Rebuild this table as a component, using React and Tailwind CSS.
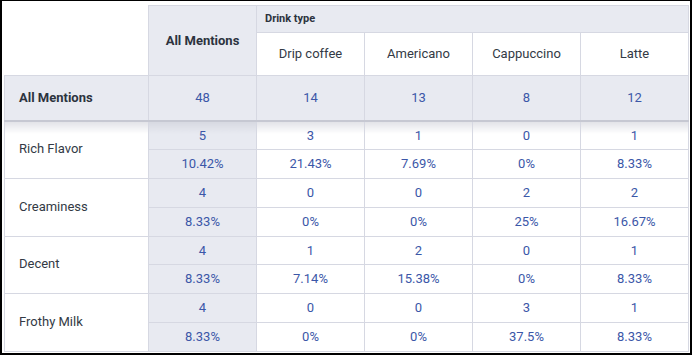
const drinks = ["Drip coffee", "Americano", "Cappuccino", "Latte"];

const totals = { all: 48, drinks: [14, 13, 8, 12] };

const rows = [
  { label: "Rich Flavor", all: [5, "10.42%"], drinks: [[3, "21.43%"], [1, "7.69%"], [0, "0%"], [1, "8.33%"]] },
  { label: "Creaminess", all: [4, "8.33%"], drinks: [[0, "0%"], [0, "0%"], [2, "25%"], [2, "16.67%"]] },
  { label: "Decent", all: [4, "8.33%"], drinks: [[1, "7.14%"], [2, "15.38%"], [0, "0%"], [1, "8.33%"]] },
  { label: "Frothy Milk", all: [4, "8.33%"], drinks: [[0, "0%"], [0, "0%"], [3, "37.5%"], [1, "8.33%"]] },
];

// row heights so the grid lines land where the screenshot has them
const countHeights = ["h-[29px]", "h-[29px]", "h-[28px]", "h-[29px]"];

const App = () => {
  return (
    <div
      className="w-[692px] h-[355px] bg-white border-black border-t border-l-2 border-r-2 border-b-2 pl-[2px] pt-[4px] overflow-hidden"
      style={{ fontFamily: "Roboto, 'Liberation Sans', sans-serif" }}
    >
      <table className="table-fixed border-collapse w-[684px] text-[13px] text-[#333a45]">
        <colgroup>
          <col className="w-[144px]" />
          <col className="w-[108px]" />
          <col className="w-[108px]" />
          <col className="w-[108px]" />
          <col className="w-[108px]" />
          <col className="w-[108px]" />
        </colgroup>

        <thead>
          <tr className="h-[27px]">
            <th rowSpan={2} className="bg-white"></th>
            <th
              rowSpan={2}
              className="bg-[#e8eaf1] border border-[#d6d8e2] font-bold text-center text-[#2c333e]"
            >
              All Mentions
            </th>
            <th
              colSpan={4}
              className="bg-[#e8eaf1] border border-[#d6d8e2] text-left pl-[8px] text-[11px] font-bold text-[#2c333e]"
            >
              Drink type
            </th>
          </tr>
          <tr className="h-[43px]">
            {drinks.map((d) => (
              <th key={d} className="bg-white border border-[#d6d8e2] font-normal text-center">
                {d}
              </th>
            ))}
          </tr>
          <tr className="h-[45px]">
            <th className="bg-[#e8eaf1] border border-[#d6d8e2] border-b-[#c6c8d2] border-b-2 text-left pl-[14px] font-bold text-[#2c333e]">
              All Mentions
            </th>
            <td className="bg-[#e8eaf1] border border-[#d6d8e2] border-b-[#c6c8d2] border-b-2 text-center text-[#3b57a8]">
              {totals.all}
            </td>
            {totals.drinks.map((n, i) => (
              <td
                key={i}
                className="bg-[#e8eaf1] border border-[#d6d8e2] border-b-[#c6c8d2] border-b-2 text-center text-[#3b57a8]"
              >
                {n}
              </td>
            ))}
          </tr>
        </thead>

        <tbody>
          {rows.map((row, index) => {
            const first = index === 0;
            return [
              <tr key={row.label + "-n"} className={countHeights[index]}>
                <td
                  rowSpan={2}
                  className={`border border-[#d6d8e2] pl-[14px] pb-[2px] ${
                    first ? "bg-[linear-gradient(to_bottom,#e2e3e8,#ffffff_12px)]" : "bg-white"
                  }`}
                >
                  {row.label}
                </td>
                <td
                  className={`border border-[#d6d8e2] text-center text-[#3b57a8] ${
                    first ? "bg-[linear-gradient(to_bottom,#d7d9e1,#e8eaf1_12px)]" : "bg-[#e8eaf1]"
                  }`}
                >
                  {row.all[0]}
                </td>
                {row.drinks.map((c, i) => (
                  <td
                    key={i}
                    className={`border border-[#d6d8e2] text-center text-[#3b57a8] ${
                      first ? "bg-[linear-gradient(to_bottom,#e2e3e8,#ffffff_12px)]" : "bg-white"
                    }`}
                  >
                    {c[0]}
                  </td>
                ))}
              </tr>,
              <tr key={row.label + "-p"} className="h-[29px]">
                <td className="bg-[#e8eaf1] border border-[#d6d8e2] text-center text-[#3b57a8]">
                  {row.all[1]}
                </td>
                {row.drinks.map((c, i) => (
                  <td key={i} className="bg-white border border-[#d6d8e2] text-center text-[#3b57a8]">
                    {c[1]}
                  </td>
                ))}
              </tr>,
            ];
          })}
        </tbody>
      </table>
    </div>
  );
};

export default App;
